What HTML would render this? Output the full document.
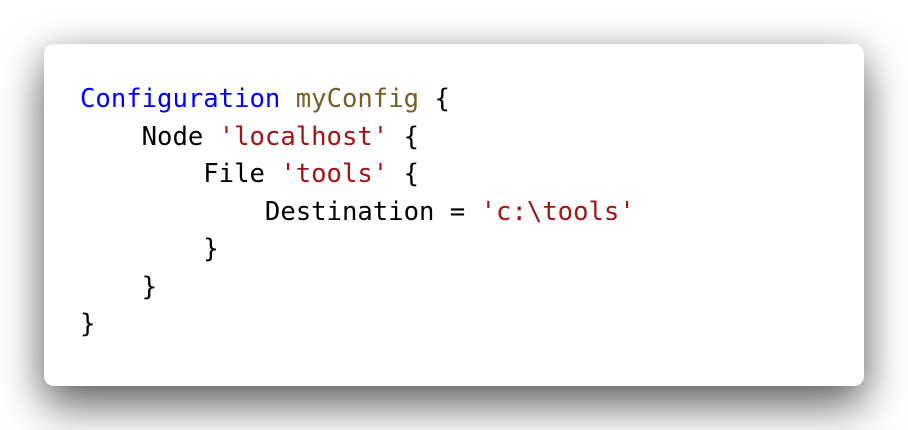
<!DOCTYPE html>
<html><head><style>
html,body{margin:0;padding:0;width:908px;height:430px;background:#fff;overflow:hidden}
.card{position:absolute;left:44px;top:44px;width:820px;height:342px;background:#fff;border-radius:10px;box-shadow:0 20px 45px rgba(0,0,0,.6),0 0 30px rgba(0,0,0,.12)}
pre{position:absolute;left:80px;top:81px;margin:0;font-family:"DejaVu Sans Mono",monospace;font-size:25.6px;line-height:37.5px;color:#000}
.k{color:#0000ff}.f{color:#795e26}.s{color:#a31515}
</style></head><body>
<div class="card"></div>
<pre><span class="k">Configuration</span> <span class="f">myConfig</span> {
    Node <span class="s">'localhost'</span> {
        File <span class="s">'tools'</span> {
            Destination = <span class="s">'c:\tools'</span>
        }
    }
}</pre>
</body></html>
